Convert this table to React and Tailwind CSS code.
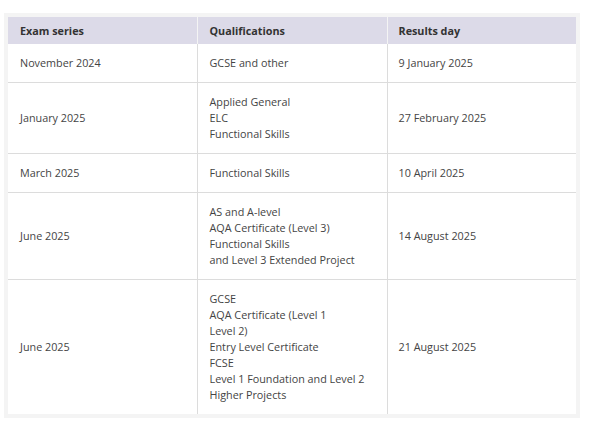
import React from "react";

const rows = [
  { series: "November 2024", quals: ["GCSE and other"], day: "9 January 2025" },
  {
    series: "January 2025",
    quals: ["Applied General", "ELC", "Functional Skills"],
    day: "27 February 2025",
  },
  { series: "March 2025", quals: ["Functional Skills"], day: "10 April 2025" },
  {
    series: "June 2025",
    quals: [
      "AS and A-level",
      "AQA Certificate (Level 3)",
      "Functional Skills",
      "and Level 3 Extended Project",
    ],
    day: "14 August 2025",
  },
  {
    series: "June 2025",
    quals: [
      "GCSE",
      "AQA Certificate (Level 1",
      "Level 2)",
      "Entry Level Certificate",
      "FCSE",
      "Level 1 Foundation and Level 2",
      "Higher Projects",
    ],
    day: "21 August 2025",
  },
];

const App = () => {
  return (
    <div className="w-[592px] h-[425px] bg-white pt-[13px] pl-[4px] font-['Open_Sans',sans-serif] text-[#444]">
      <div className="w-[576px] bg-[#f4f4f4] p-[4px]">
        <table className="w-[568px] table-fixed border-collapse bg-white text-[10.8px] leading-[16px]">
          <thead>
            <tr className="bg-[#dcdae8] h-[27px] text-[#333]">
              <th className="w-[189px] px-[12px] text-left font-bold border-r border-[#f4f4f4]">
                Exam series
              </th>
              <th className="w-[190px] px-[12px] text-left font-bold border-r border-[#f4f4f4]">
                Qualifications
              </th>
              <th className="px-[11px] text-left font-bold">Results day</th>
            </tr>
          </thead>
          <tbody>
            {rows.map((row, i) => (
              <tr key={i} className="border-b border-[#dcdcdc] last:border-b-0">
                <td className="px-[12px] py-[11px] align-middle border-r border-[#dcdcdc]">
                  {row.series}
                </td>
                <td className="px-[12px] py-[11px] align-middle border-r border-[#dcdcdc]">
                  {row.quals.map((q, j) => (
                    <div key={j}>{q}</div>
                  ))}
                </td>
                <td className="px-[11px] py-[11px] align-middle">{row.day}</td>
              </tr>
            ))}
          </tbody>
        </table>
      </div>
    </div>
  );
};

export default App;
